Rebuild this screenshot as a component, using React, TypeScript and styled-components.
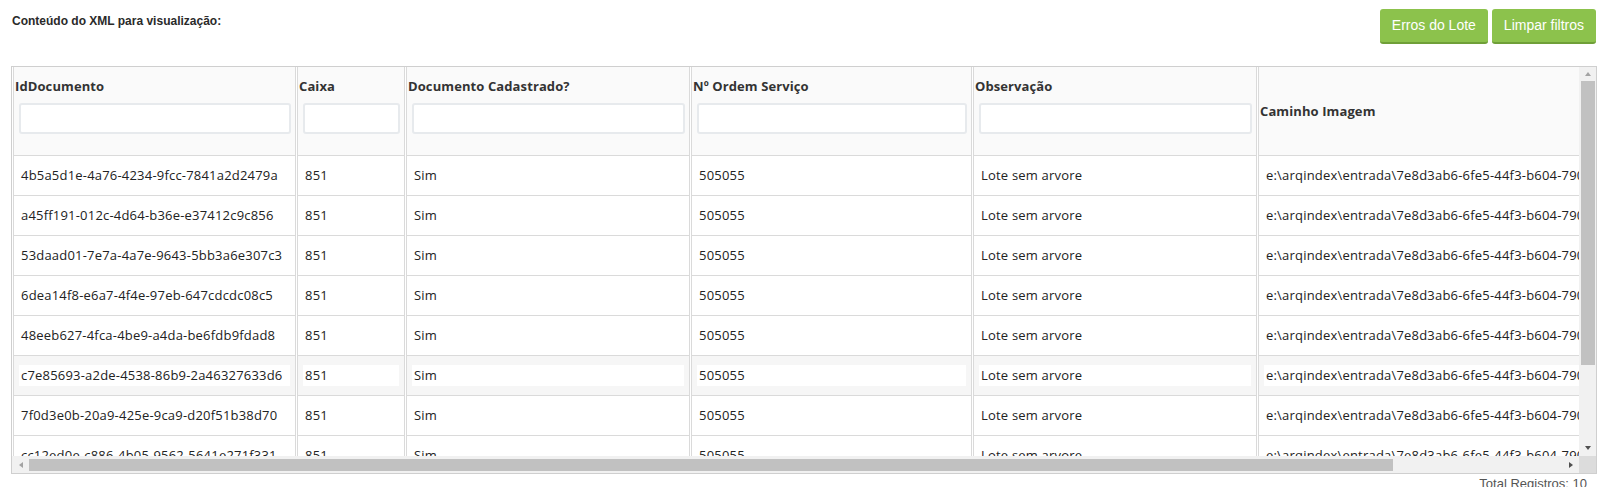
import React from "react";
import styled, { createGlobalStyle } from "styled-components";

const GlobalStyle = createGlobalStyle`
  html, body { margin: 0; padding: 0; background: #fff; }
  body { font-family: "Open Sans", sans-serif; }
`;

const Page = styled.div`
  width: 1604px;
  height: 487px;
  overflow: hidden;
  box-sizing: border-box;
  padding: 9px 7px 0 11px;
  display: flex;
  flex-direction: column;
`;

const TopBar = styled.div`
  display: flex;
  justify-content: space-between;
  align-items: flex-start;
  height: 35px;
`;

const Title = styled.h4`
  margin: 5px 0 0 1px;
  font: bold 12px/14px "Liberation Sans", Arial, sans-serif;
  color: #2a2a2a;
`;

const Actions = styled.div`
  display: flex;
  gap: 4px;
  margin-right: 1px;
`;

const ActionButton = styled.button`
  height: 35px;
  box-sizing: border-box;
  padding: 6px 12px;
  border: 0;
  border-bottom: 2px solid #6f9f38;
  border-radius: 3px;
  background: #8cc24c;
  color: #fff;
  font: 14px/21px "Liberation Sans", Arial, sans-serif;
  cursor: pointer;
`;

const GridFrame = styled.div`
  margin-top: 22px;
  width: 1586px;
  box-sizing: border-box;
  border: 1px solid #cfcfcf;
  display: grid;
  grid-template-columns: 1fr 17px;
  grid-template-rows: 389px 17px;
`;

const Viewport = styled.div`
  overflow: hidden;
`;

const Table = styled.table`
  border-collapse: separate;
  border-spacing: 1px 0;
  table-layout: fixed;
  width: 1807px;
`;

const HeadCell = styled.th<{ $w: number }>`
  width: ${(p) => p.$w}px;
  box-sizing: border-box;
  background: #fafafa;
  border-left: 1px solid #dadada;
  border-right: 1px solid #dadada;
  border-bottom: 1px solid #dadada;
  padding: 10px 2px 10px 1px;
  vertical-align: middle;
  text-align: left;
  font: bold 13px/18px "Open Sans", sans-serif;
  letter-spacing: 0.1px;
  color: #333;
  white-space: nowrap;
`;

const FilterInput = styled.input`
  display: block;
  box-sizing: border-box;
  margin: 8px 0 11px 4px;
  width: calc(100% - 6px);
  height: 31px;
  border: 2px solid #e7eaed;
  border-radius: 3px;
  background: #fff;
  outline: none;
`;

const Row = styled.tr<{ $hl?: boolean }>`
  background: ${(p) => (p.$hl ? "#f6f6f6" : "#fff")};
`;

const Cell = styled.td`
  box-sizing: border-box;
  border-left: 1px solid #dadada;
  border-right: 1px solid #dadada;
  border-bottom: 1px solid #dadada;
  padding: 9px 5px;
  font: 13px/21px "Open Sans", sans-serif;
  letter-spacing: 0.2px;
  color: #222;
`;

const CellText = styled.div`
  height: 21px;
  padding: 0 2px;
  background: #fff;
  white-space: nowrap;
  overflow: hidden;
`;

const VScroll = styled.div`
  background: #f1f1f1;
  display: flex;
  flex-direction: column;
  align-items: center;
`;

const HScroll = styled.div`
  background: #f1f1f1;
  display: flex;
  align-items: center;
`;

const ArrowBox = styled.div<{ $size: number; $vertical?: boolean }>`
  flex: none;
  display: flex;
  align-items: center;
  justify-content: center;
  ${(p) => (p.$vertical ? `height: ${p.$size}px; width: 17px;` : `width: ${p.$size}px; height: 17px;`)}
`;

const Triangle = styled.span<{ $dir: "up" | "down" | "left" | "right" }>`
  width: 0;
  height: 0;
  border: 4px solid transparent;
  ${(p) =>
    p.$dir === "up"
      ? "border-bottom-color: #a3a3a3; border-top-width: 0; border-left-width: 3.5px; border-right-width: 3.5px;"
      : p.$dir === "down"
      ? "border-top-color: #505050; border-bottom-width: 0; border-left-width: 3.5px; border-right-width: 3.5px;"
      : p.$dir === "left"
      ? "border-right-color: #a3a3a3; border-left-width: 0; border-top-width: 3.5px; border-bottom-width: 3.5px;"
      : "border-left-color: #505050; border-right-width: 0; border-top-width: 3.5px; border-bottom-width: 3.5px;"}
`;

const VThumb = styled.div`
  flex: none;
  width: 14px;
  height: 284px;
  background: #c1c1c1;
`;

const HThumb = styled.div`
  flex: none;
  height: 12px;
  width: 1364px;
  background: #c1c1c1;
`;

const Spacer = styled.div`
  flex: 1;
`;

const Corner = styled.div`
  background: #dcdcdc;
`;

const Total = styled.div`
  margin-top: 2px;
  padding-right: 10px;
  text-align: right;
  font: 13px/15px "Liberation Sans", Arial, sans-serif;
  color: #555;
`;

const columns = [
  { title: "IdDocumento", w: 283, filter: true },
  { title: "Caixa", w: 108, filter: true },
  { title: "Documento Cadastrado?", w: 284, filter: true },
  { title: "Nº Ordem Serviço", w: 281, filter: true },
  { title: "Observação", w: 284, filter: true },
  { title: "Caminho Imagem", w: 560, filter: false },
];

const ids = [
  "4b5a5d1e-4a76-4234-9fcc-7841a2d2479a",
  "a45ff191-012c-4d64-b36e-e37412c9c856",
  "53daad01-7e7a-4a7e-9643-5bb3a6e307c3",
  "6dea14f8-e6a7-4f4e-97eb-647cdcdc08c5",
  "48eeb627-4fca-4be9-a4da-be6fdb9fdad8",
  "c7e85693-a2de-4538-86b9-2a46327633d6",
  "7f0d3e0b-20a9-425e-9ca9-d20f51b38d70",
  "cc12ed0e-c886-4b05-9562-5641e271f331",
];

const path = "e:\\arqindex\\entrada\\7e8d3ab6-6fe5-44f3-b604-790c2d41a8e3\\imagem.tif";

export default function App() {
  return (
    <>
      <GlobalStyle />
      <Page>
        <TopBar>
          <Title>Conteúdo do XML para visualização:</Title>
          <Actions>
            <ActionButton>Erros do Lote</ActionButton>
            <ActionButton>Limpar filtros</ActionButton>
          </Actions>
        </TopBar>
        <GridFrame>
          <Viewport>
            <Table>
              <thead>
                <tr>
                  {columns.map((c) => (
                    <HeadCell key={c.title} $w={c.w}>
                      {c.title}
                      {c.filter && <FilterInput type="text" />}
                    </HeadCell>
                  ))}
                </tr>
              </thead>
              <tbody>
                {ids.map((id, i) => (
                  <Row key={id} $hl={i === 5}>
                    <Cell><CellText>{id}</CellText></Cell>
                    <Cell><CellText>851</CellText></Cell>
                    <Cell><CellText>Sim</CellText></Cell>
                    <Cell><CellText>505055</CellText></Cell>
                    <Cell><CellText>Lote sem arvore</CellText></Cell>
                    <Cell><CellText>{path}</CellText></Cell>
                  </Row>
                ))}
              </tbody>
            </Table>
          </Viewport>
          <VScroll>
            <ArrowBox $vertical $size={14}><Triangle $dir="up" /></ArrowBox>
            <VThumb />
            <Spacer />
            <ArrowBox $vertical $size={17}><Triangle $dir="down" /></ArrowBox>
          </VScroll>
          <HScroll>
            <ArrowBox $size={17}><Triangle $dir="left" /></ArrowBox>
            <HThumb />
            <Spacer />
            <ArrowBox $size={17}><Triangle $dir="right" /></ArrowBox>
          </HScroll>
          <Corner />
        </GridFrame>
        <Total>Total Registros: 10</Total>
      </Page>
    </>
  );
}
